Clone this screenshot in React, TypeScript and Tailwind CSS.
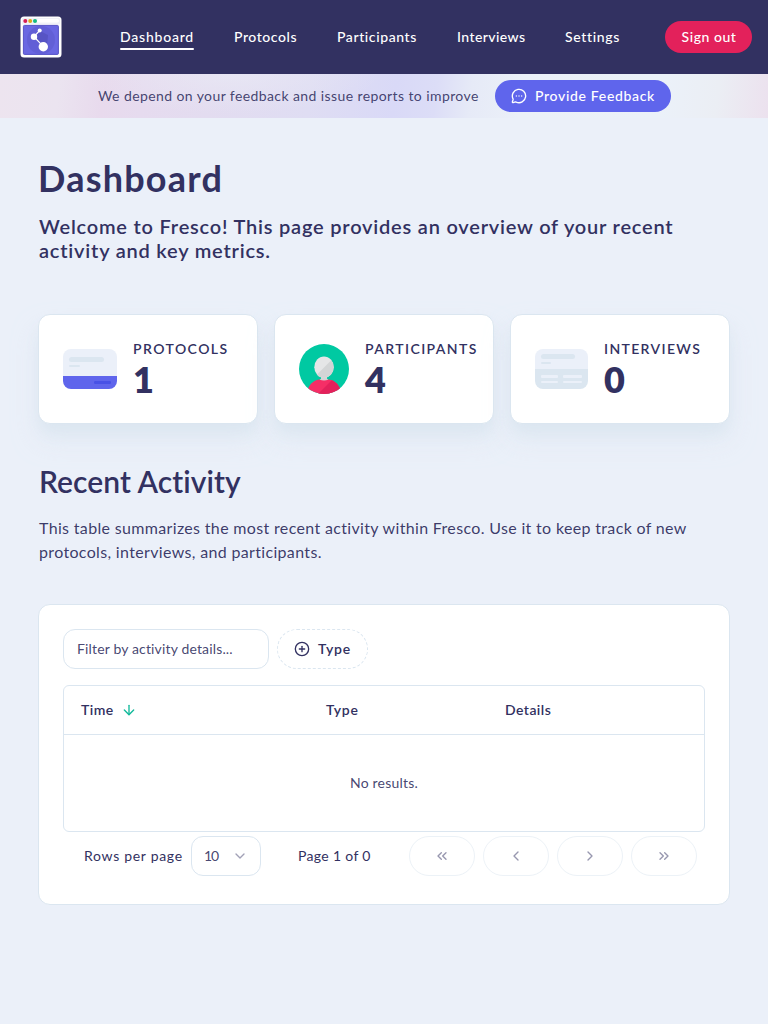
import type { ReactNode } from "react";
import {
  ArrowDown,
  ChevronDown,
  ChevronLeft,
  ChevronRight,
  ChevronsLeft,
  ChevronsRight,
  CirclePlus,
  MessageCircleMore,
} from "lucide-react";

function Logo() {
  return (
    <svg viewBox="0 0 42 42" className="size-[42px] shrink-0">
      <rect x="0.5" y="0.5" width="41" height="41" rx="3.5" fill="#fff" />
      <rect x="2" y="2" width="38" height="6.5" rx="1" fill="#f1f2f8" />
      <rect x="17" y="3" width="22" height="3.5" rx="1.7" fill="#fff" />
      <circle cx="5.3" cy="5" r="2" fill="#d61f56" />
      <circle cx="10.2" cy="5" r="2" fill="#e0a91d" />
      <circle cx="15" cy="5" r="2" fill="#12ba82" />
      <rect x="3.4" y="9.4" width="35" height="29" rx="1" fill="#6a67e2" stroke="#5552c6" strokeWidth="1" />
      <circle cx="21" cy="24" r="14" fill="#625fd6" />
      <path d="M20 15l8 4-1 11-4 1-9-10z" fill="#5754c4" />
      <path d="M19.7 14.5L14 20.7l9.5 10" stroke="#fff" strokeWidth="1.2" fill="none" />
      <circle cx="19.7" cy="14.5" r="2" fill="#fff" />
      <circle cx="14" cy="20.7" r="3.2" fill="#fff" />
      <circle cx="23.3" cy="30.7" r="4.7" fill="#fff" />
    </svg>
  );
}

function ProtocolIcon() {
  return (
    <svg viewBox="0 0 54 40" className="h-10 w-[54px] shrink-0">
      <path d="M8 0H46A8 8 0 0 1 54 8V27H0V8A8 8 0 0 1 8 0Z" fill="#ebf0f9" />
      <path d="M0 27H54V32A8 8 0 0 1 46 40H8A8 8 0 0 1 0 32Z" fill="#5f65ec" />
      <rect x="6" y="8" width="35" height="5" rx="2.5" fill="#dbe6f0" />
      <rect x="6" y="16" width="11" height="2" rx="1" fill="#dbe6f0" />
      <rect x="31" y="32" width="17" height="3" rx="1.2" fill="#4851e6" />
    </svg>
  );
}

function ParticipantIcon() {
  return (
    <svg viewBox="0 0 50 50" className="size-[50px] shrink-0">
      <defs>
        <clipPath id="avatar">
          <circle cx="25" cy="25" r="25" />
        </clipPath>
        <clipPath id="head">
          <ellipse cx="25" cy="23.2" rx="9.7" ry="10.8" />
        </clipPath>
        <clipPath id="body">
          <path d="M20 35.5C14 36.5 10 41 8.5 46V51H41.5V46C40 41 36 36.5 30 35.5Z" />
        </clipPath>
      </defs>
      <circle cx="25" cy="25" r="25" fill="#00c9a2" />
      <g clipPath="url(#avatar)">
        <g clipPath="url(#body)">
          <rect y="34" width="50" height="16" fill="#f52e66" />
          <path d="M35 34L17 52H50V34Z" fill="#e3215b" />
        </g>
        <path d="M22 31H28V34.8L29.5 35.6Q25 37.6 20.5 35.6L22 34.8Z" fill="#d3d5d6" />
        <g clipPath="url(#head)">
          <rect x="14" y="12" width="22" height="23" fill="#e5e6e7" />
          <path d="M38 10.5L12 36.5H38Z" fill="#d3d5d6" />
        </g>
      </g>
    </svg>
  );
}

function InterviewIcon() {
  return (
    <svg viewBox="0 0 53 40" className="h-10 w-[53px] shrink-0">
      <path d="M8 0H45A8 8 0 0 1 53 8V20H0V8A8 8 0 0 1 8 0Z" fill="#ebf0f9" />
      <path d="M0 20H53V32A8 8 0 0 1 45 40H8A8 8 0 0 1 0 32Z" fill="#dbe6f0" />
      <rect x="6" y="5" width="34" height="5" rx="2.5" fill="#dbe6f0" />
      <rect x="6" y="13" width="10" height="2" rx="1" fill="#dbe6f0" />
      <g fill="#ebf0f9">
        <rect x="6" y="26" width="17" height="3" rx="1" />
        <rect x="28" y="26" width="19" height="3" rx="1" />
        <rect x="6" y="32" width="17" height="2" rx="1" />
        <rect x="28" y="32" width="19" height="2" rx="1" />
      </g>
    </svg>
  );
}

const links = [
  { label: "Dashboard", style: "w-[74px] tracking-[0.056em]", active: true },
  { label: "Protocols", style: "w-[63px] tracking-[0.04em]" },
  { label: "Participants", style: "w-[80px] tracking-[0.043em]" },
  { label: "Interviews", style: "w-[68px] tracking-[0.03em]" },
  { label: "Settings", style: "w-[55px] tracking-[0.046em]" },
];

function Stat({ icon, label, value, tracking }: { icon: ReactNode; label: string; value: number; tracking: string }) {
  return (
    <div className="flex h-[110px] items-center gap-4 rounded-xl border border-[#dbe6f0] bg-white pl-6 shadow-[0_10px_15px_-3px_#dbe6f0,0_16px_24px_0px_#dbe6f090]">
      {icon}
      <div className="pb-px">
        <div className={`text-sm leading-5 font-semibold whitespace-nowrap ${tracking}`}>{label}</div>
        <div className="text-4xl leading-10 font-extrabold">{value}</div>
      </div>
    </div>
  );
}

const pagers = [ChevronsLeft, ChevronLeft, ChevronRight, ChevronsRight];

export default function App() {
  return (
    <div className="min-h-screen bg-[#ebf0f9] font-[Lato,'Open_Sans',sans-serif] text-[#323161] [font-variant-ligatures:none]">
      <header className="flex h-[74px] items-center bg-[#323161] pr-4 pl-5 text-sm text-white">
        <Logo />
        <nav className="ml-[58px] flex gap-10 font-medium">
          {links.map((l) => (
            <a key={l.label} className={`relative whitespace-nowrap ${l.style}`}>
              {l.label}
              {l.active && <span className="absolute -bottom-[3px] left-0 h-0.5 w-full rounded-full bg-white" />}
            </a>
          ))}
        </nav>
        <button className="ml-auto h-8 w-[87px] rounded-full bg-[#e3215b] pl-px font-medium tracking-[0.038em]">Sign out</button>
      </header>

      <div className="flex h-11 items-center justify-center gap-4 bg-[radial-gradient(ellipse_150px_40px_at_230px_0px,#eaeaf5b0,#eaeaf500),linear-gradient(97deg,#ede4ef_0px,#ebe4f0_60px,#e8daed_105px,#e6dbef_145px,#e3dcf0_210px,#dfddf3_310px,#d9d9f7_395px,#dcddf7_435px,#e6eaf7_470px,#ebf0f8_520px,#ebf1f9_660px,#ebeef4_715px,#ece1ee_768px)]">
        <span className="w-[382px] pl-px text-sm tracking-[0.029em] whitespace-nowrap text-[#323161]/90">
          We depend on your feedback and issue reports to improve
        </span>
        <button className="flex h-8 w-44 items-center gap-2 rounded-full bg-[#5f65ec] pl-4 text-sm font-medium tracking-[0.048em] whitespace-nowrap text-white">
          <MessageCircleMore className="size-4" strokeWidth={2} />
          Provide Feedback
        </button>
      </div>

      <main className="px-[38px] pt-10">
        <h1 className="text-4xl leading-10 font-bold tracking-[0.034em]">Dashboard</h1>
        <p className="mt-4 pl-px text-xl leading-6 font-semibold tracking-[0.0395em]">
          Welcome to Fresco! This page provides an overview of your recent
          <br />
          activity and key metrics.
        </p>

        <section className="mt-[52px] grid grid-cols-3 gap-4">
          <Stat icon={<ProtocolIcon />} label="PROTOCOLS" value={1} tracking="tracking-[0.103em]" />
          <Stat icon={<ParticipantIcon />} label="PARTICIPANTS" value={4} tracking="tracking-[0.1em]" />
          <Stat icon={<InterviewIcon />} label="INTERVIEWS" value={0} tracking="tracking-[0.097em]" />
        </section>

        <h2 className="mt-[39px] pl-px text-3xl leading-9 font-semibold tracking-[0.002em]">Recent Activity</h2>
        <p className="mt-[17px] pl-px text-base leading-6 tracking-[0.021em] text-[#323161]/95">
          This table summarizes the most recent activity within Fresco. Use it to keep track of new
          <br />
          protocols, interviews, and participants.
        </p>

        <section className="mt-10 h-[301px] rounded-xl border border-[#dbe6f0] bg-white p-6 text-sm">
          <div className="flex gap-2">
            <input
              className="h-10 w-[206px] rounded-xl border border-[#dbe6f0] px-[13px] pb-0.5 tracking-[0.011em] placeholder:text-[#323161]/90"
              placeholder="Filter by activity details..."
            />
            <button className="flex h-10 w-[91px] items-center gap-2 rounded-full border border-dashed border-[#dbe6f0] pl-4 font-semibold tracking-[0.055em]">
              <CirclePlus className="size-4" />
              Type
            </button>
          </div>

          <div className="mt-4 h-[147px] rounded-md border border-[#dbe6f0]">
            <div className="grid h-[49px] grid-cols-[245px_179px_1fr] items-center border-b border-[#dbe6f0] pl-[17px] font-semibold tracking-[0.032em]">
              <span className="flex items-center gap-[7px]">
                Time
                <ArrowDown className="size-4 text-[#10b99a]" />
              </span>
              <span className="tracking-[0.05em]">Type</span>
              <span>Details</span>
            </div>
            <div className="flex h-24 items-center justify-center tracking-[0.015em] text-[#323161]/90">No results.</div>
          </div>

          <div className="mt-1 flex items-center pr-2 pl-[21px]">
            <span className="w-[107px] tracking-[0.05em]">Rows per page</span>
            <button className="flex h-10 w-[70px] items-center justify-between rounded-xl border border-[#dbe6f0] px-3 tracking-[-0.08em] text-[#323161]/90">
              10
              <ChevronDown className="size-4 opacity-50" />
            </button>
            <span className="ml-[37px] tracking-[0.024em]">Page 1 of 0</span>
            <div className="ml-auto flex gap-2">
              {pagers.map((Icon, i) => (
                <button key={i} className="flex h-10 w-[66px] items-center justify-center rounded-full border border-[#dbe6f0] opacity-50">
                  <Icon className="size-4" />
                </button>
              ))}
            </div>
          </div>
        </section>
      </main>
    </div>
  );
}
